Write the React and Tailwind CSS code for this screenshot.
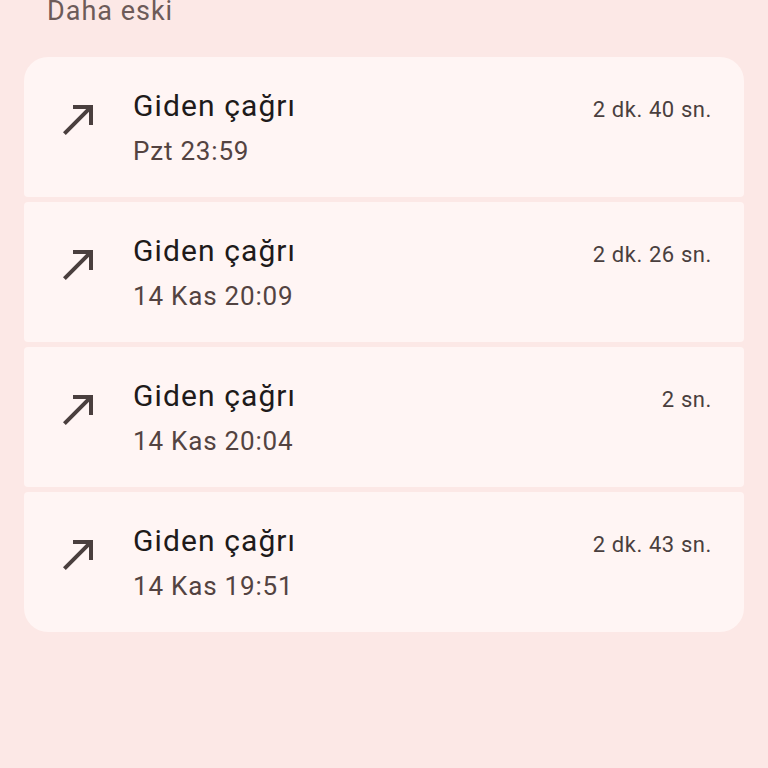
import React from "react";

const calls = [
  { time: "Pzt 23:59", dur: "2 dk. 40 sn." },
  { time: "14 Kas 20:09", dur: "2 dk. 26 sn." },
  { time: "14 Kas 20:04", dur: "2 sn." },
  { time: "14 Kas 19:51", dur: "2 dk. 43 sn." },
];

function CallMade() {
  return (
    <svg viewBox="0 0 24 24" className="w-12 h-12" fill="#4a3f3e">
      <path d="M9 5v2h6.59L4 18.59 5.41 20 17 8.41V15h2V5z" />
    </svg>
  );
}

export default function App() {
  return (
    <div
      className="w-[768px] h-[768px] overflow-hidden bg-[#fce8e6]"
      style={{ fontFamily: "Roboto, 'Noto Sans', sans-serif" }}
    >
      <div className="pl-[47px] -mt-[5px] h-[32px] text-[27px] leading-[32px] tracking-[1px] text-[#6d5b59]">
        Daha eski
      </div>
      <div className="mt-[30px] mx-[24px] flex flex-col gap-[5px]">
        {calls.map((c, i) => (
          <div
            key={i}
            className={
              "h-[140px] bg-[#fff5f4] flex items-start pl-[31px] pr-[32px] pt-[30px] " +
              (i === 0
                ? "rounded-t-[24px] rounded-b-[4px]"
                : i === calls.length - 1
                ? "rounded-b-[24px] rounded-t-[4px]"
                : "rounded-[4px]")
            }
          >
            <div className="mt-[8px] shrink-0">
              <CallMade />
            </div>
            <div className="ml-[30px] flex-1 flex flex-col">
              <div className="text-[30px] leading-[38px] tracking-[1.1px] text-[#201a1a]">Giden çağrı</div>
              <div className="mt-[10px] text-[26px] leading-[32px] tracking-[0.8px] text-[#534341]">{c.time}</div>
            </div>
            <div className="mt-[5px] text-[22px] leading-[36px] tracking-[0.6px] text-[#4a3f3e]">{c.dur}</div>
          </div>
        ))}
      </div>
    </div>
  );
}
